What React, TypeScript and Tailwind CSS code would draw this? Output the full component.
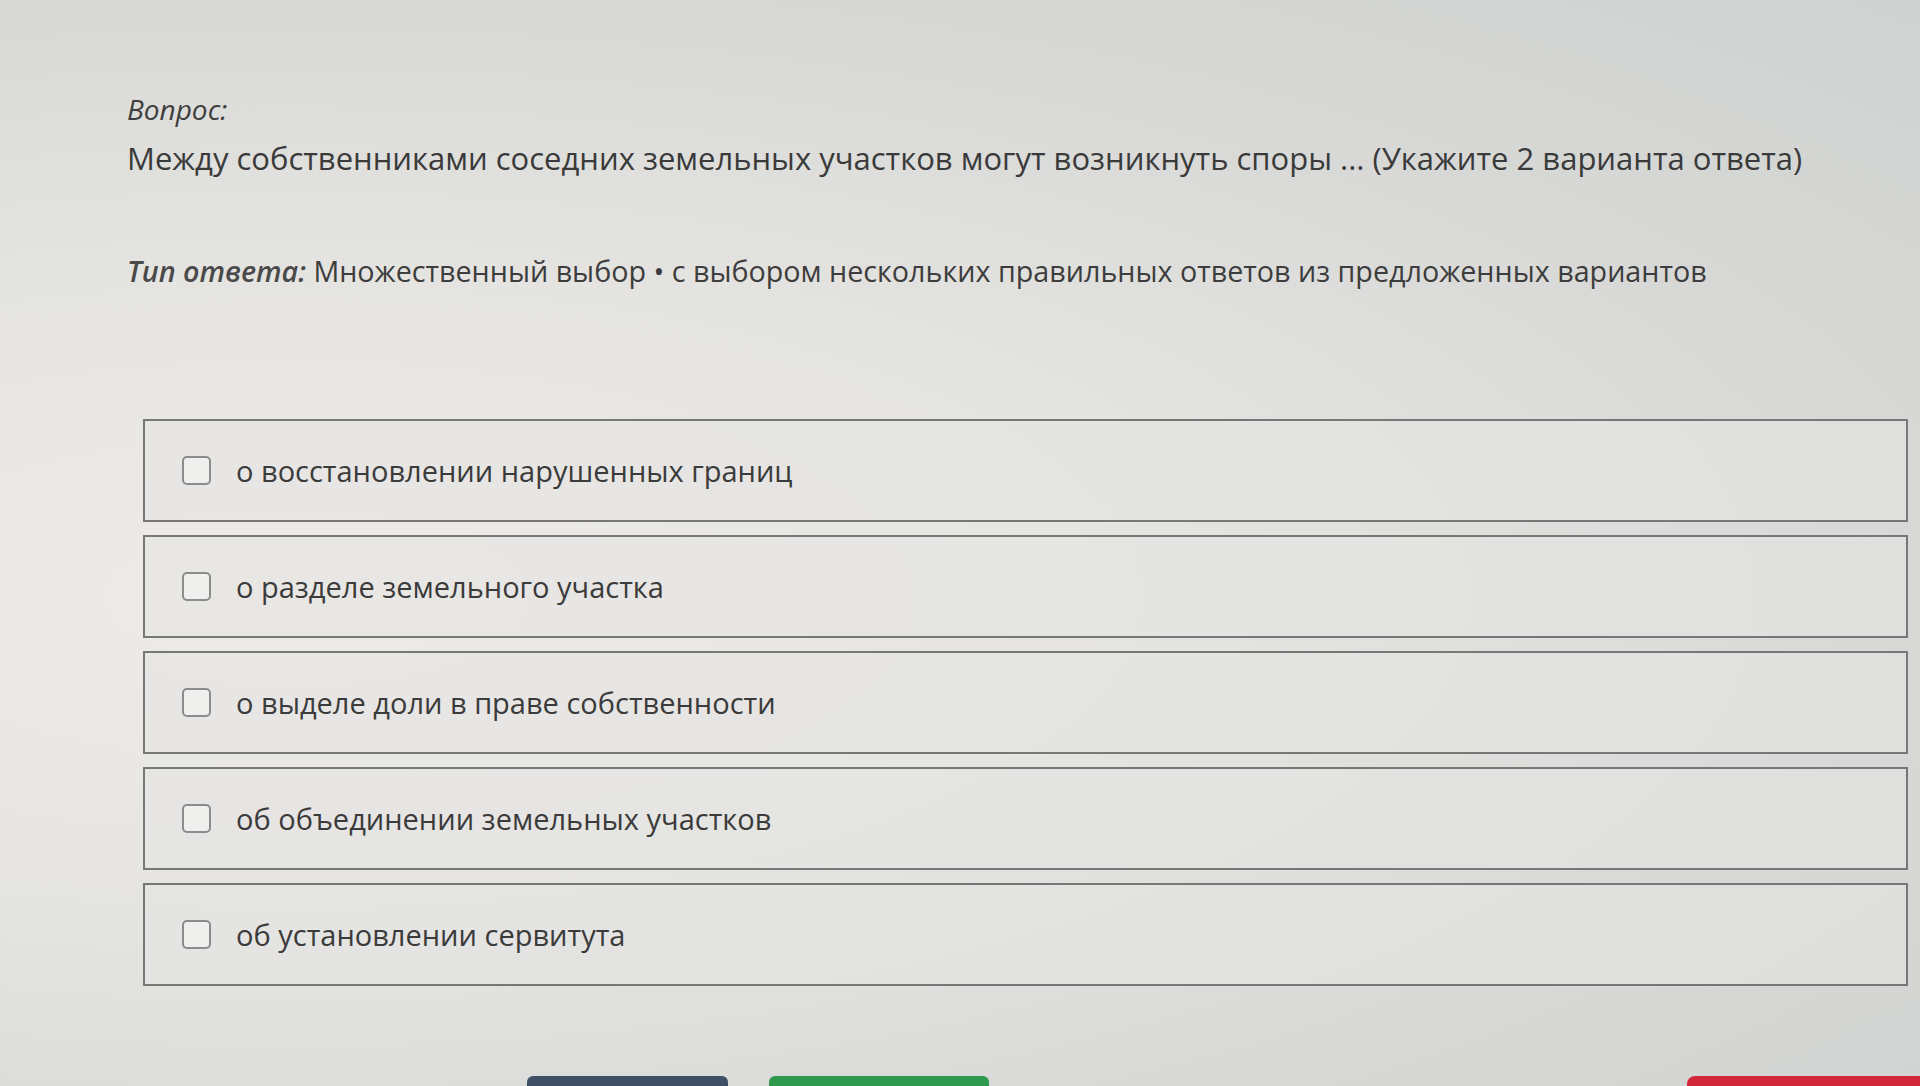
const options = [
  "о восстановлении нарушенных границ",
  "о разделе земельного участка",
  "о выделе доли в праве собственности",
  "об объединении земельных участков",
  "об установлении сервитута",
];

function Option({ label }: { label: string }) {
  return (
    <label className="flex h-[103px] items-center gap-[25px] border-2 border-[#767877] bg-[#e4e5e3]/60 pl-[37px]">
      <span className="block h-[29px] w-[29px] rounded-[5px] border-2 border-[#8c8c8c] bg-[#efefed]" />
      <span className="text-[29px] leading-none text-[#3b3b3b]">{label}</span>
    </label>
  );
}

export default function App() {
  return (
    <div
      className="relative h-[1086px] w-full overflow-hidden bg-[#dcdcda] bg-[radial-gradient(ellipse_at_15%_55%,#efebe7_0%,#e6e5e2_35%,#d8d9d7_70%,#cfd2d0_100%)]"
      style={{ fontFamily: '"Open Sans", "Noto Sans", sans-serif' }}
    >
      <div className="pl-[127px] pt-[92px]">
        <p className="text-[28px] italic leading-[34px] text-[#3e3e3e]">Вопрос:</p>
        <p className="mt-[12px] text-[31px] leading-[40px] text-[#3a3a3a]">
          Между собственниками соседних земельных участков могут возникнуть споры ... (Укажите 2 варианта ответа)
        </p>
        <p className="mt-[73px] text-[28.7px] leading-[40px] text-[#3d3d3d]">
          <span className="font-semibold italic text-[#4a4a4a]">Тип ответа:</span> Множественный выбор • с выбором нескольких правильных ответов из предложенных вариантов
        </p>
      </div>

      <div className="ml-[143px] mr-[12px] mt-[128px] flex flex-col gap-[13px]">
        {options.map((o) => (
          <Option key={o} label={o} />
        ))}
      </div>

      <div className="mt-[90px] flex items-start pl-[527px] pr-0">
        <div className="h-[40px] w-[201px] rounded-[6px] bg-[#3e4f66]" />
        <div className="ml-[41px] h-[40px] w-[220px] rounded-[6px] bg-[#2f9a4e]" />
        <div className="ml-auto h-[40px] w-[233px] rounded-l-[8px] bg-[#d2283a]" />
      </div>
    </div>
  );
}
